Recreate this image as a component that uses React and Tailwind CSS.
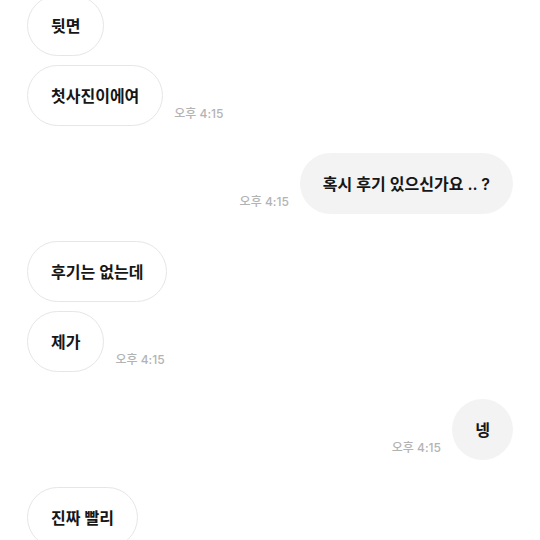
const messages = [
  { side: "left", text: "뒷면" },
  { side: "left", text: "첫사진이에여", time: "오후 4:15" },
  { side: "right", text: "혹시 후기 있으신가요 .. ?", time: "오후 4:15", gap: true },
  { side: "left", text: "후기는 없는데", gap: true },
  { side: "left", text: "제가", time: "오후 4:15" },
  { side: "right", text: "넹", time: "오후 4:15", gap: true },
  { side: "left", text: "진짜 빨리", gap: true },
]

function Bubble({ side, text }) {
  const base = "h-[61px] min-w-[61px] px-[23px] flex items-center justify-center rounded-full text-[16px] font-semibold text-[#161616] whitespace-nowrap"
  if (side === "right") {
    return <div className={base + " bg-[#f3f3f3]"}>{text}</div>
  }
  return <div className={base + " bg-white border border-[#e6e6e6]"}>{text}</div>
}

function Time({ time }) {
  return (
    <span className="mb-[3px] text-[12px] font-medium text-[#b3b3b3] whitespace-nowrap">
      {time}
    </span>
  )
}

export default function App() {
  return (
    <div
      className="w-[540px] h-[540px] overflow-hidden bg-white px-[27px]"
      style={{ fontFamily: 'Inter, "Noto Sans CJK KR", sans-serif' }}
    >
      <div className="flex flex-col -mt-[5px]">
        {messages.map((m, i) => (
          <div
            key={i}
            className={
              "flex items-end gap-[11px] " +
              (m.side === "right" ? "justify-end " : "") +
              (i === 0 ? "" : m.gap ? "mt-[27px]" : "mt-[9px]")
            }
          >
            {m.side === "right" && m.time && <Time time={m.time} />}
            <Bubble side={m.side} text={m.text} />
            {m.side === "left" && m.time && <Time time={m.time} />}
          </div>
        ))}
      </div>
    </div>
  )
}
